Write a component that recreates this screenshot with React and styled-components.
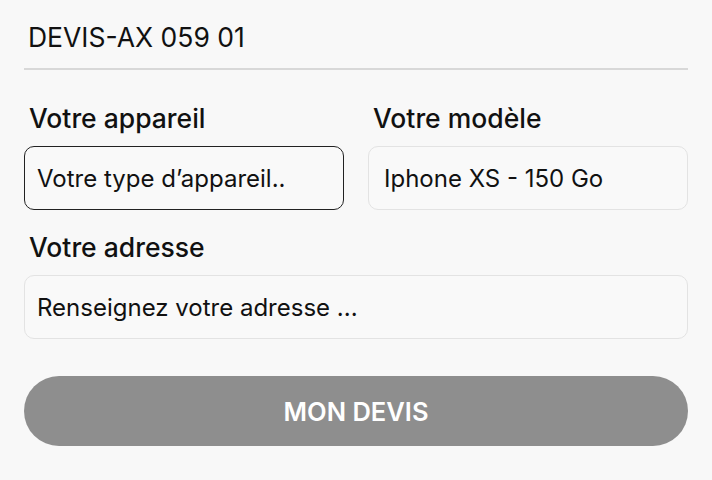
import React from "react";
import styled, { createGlobalStyle } from "styled-components";

const GlobalStyle = createGlobalStyle`
  body {
    margin: 0;
    background: #f8f8f8;
    font-family: Inter, "Noto Sans", sans-serif;
    color: #111;
  }
`;

const Page = styled.div`
  width: 712px;
  height: 480px;
  box-sizing: border-box;
  padding: 0 24px;
  display: flex;
  flex-direction: column;
`;

const Header = styled.div`
  height: 70px;
  box-sizing: border-box;
  padding: 21px 0 0 4px;
  font-size: 26.5px;
  line-height: 32px;
  border-bottom: 2px solid #d8d8d8;
`;

const Grid = styled.div`
  display: grid;
  grid-template-columns: 1fr 1fr;
  column-gap: 24px;
  margin-top: 33px;
`;

const Field = styled.div`
  display: flex;
  flex-direction: column;
  margin-top: ${(p) => p.top || 0}px;
`;

const Label = styled.label`
  font-size: 26.5px;
  font-weight: 500;
  line-height: 30px;
  padding-left: 5px;
  margin-bottom: 13px;
`;

const Input = styled.div`
  height: 64px;
  box-sizing: border-box;
  display: flex;
  align-items: center;
  padding: 0 ${(p) => p.pad || 12}px;
  border-radius: 10px;
  background: #f9f9f9;
  border: ${(p) => (p.active ? "1.5px solid #222" : "1.5px solid #e3e3e3")};
  font-size: 24px;
  color: #111;
`;

const Button = styled.button`
  margin-top: 37px;
  height: 70px;
  border: none;
  border-radius: 35px;
  background: #8e8e8e;
  color: #fff;
  font-family: Inter, "Noto Sans", sans-serif;
  font-size: 25.5px;
  font-weight: 600;
`;

export default function App() {
  return (
    <>
      <GlobalStyle />
      <Page>
        <Header>DEVIS-AX 059 01</Header>
        <Grid>
          <Field>
            <Label>Votre appareil</Label>
            <Input active>Votre type d’appareil..</Input>
          </Field>
          <Field>
            <Label>Votre modèle</Label>
            <Input pad={15}>Iphone XS - 150 Go</Input>
          </Field>
        </Grid>
        <Field top={22}>
          <Label>Votre adresse</Label>
          <Input>Renseignez votre adresse ...</Input>
        </Field>
        <Button>MON DEVIS</Button>
      </Page>
    </>
  );
}
